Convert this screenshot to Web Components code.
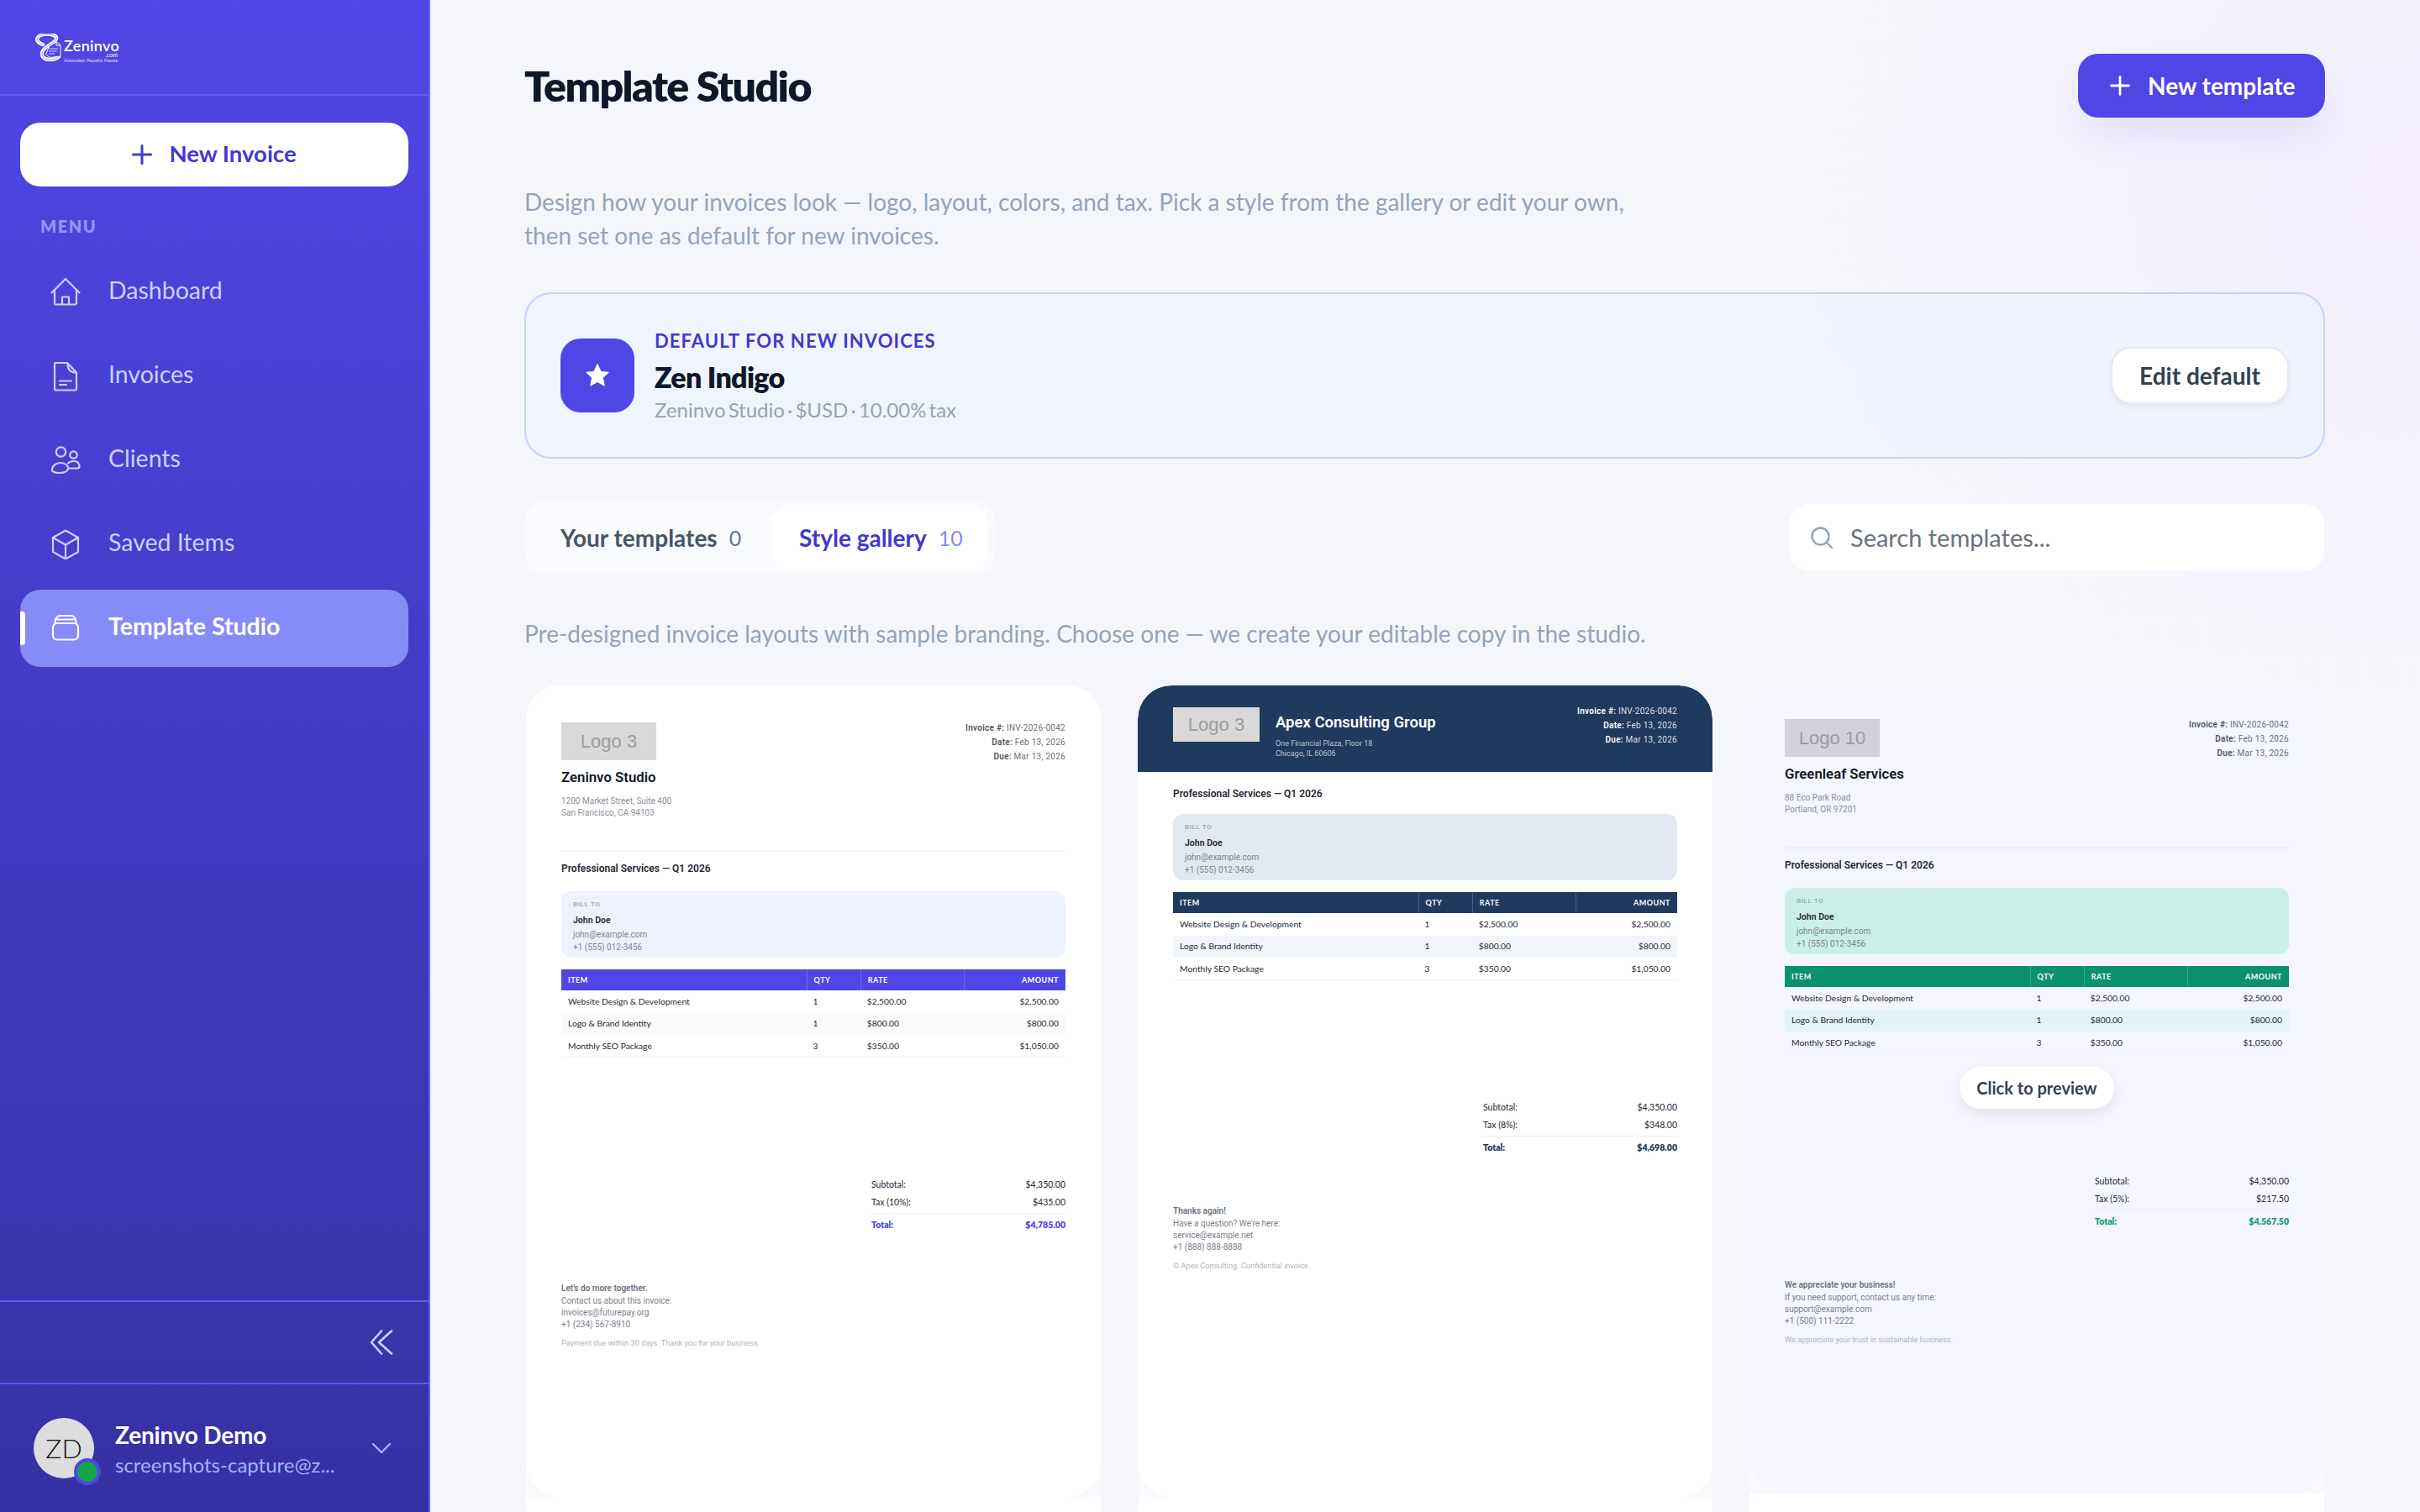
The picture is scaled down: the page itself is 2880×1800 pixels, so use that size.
<!DOCTYPE html>
<html lang="en">
<head>
<meta charset="utf-8">
<title>Template Studio</title>
<style>
  html, body { margin: 0; height: 100%; overflow: hidden; }
  body { font-family: "Lato", "Noto Sans", sans-serif; }
</style>
</head>
<body>
<app-shell>
  <side-bar slot="side">
    <nav-item icon="home">Dashboard</nav-item>
    <nav-item icon="doc">Invoices</nav-item>
    <nav-item icon="users">Clients</nav-item>
    <nav-item icon="cube">Saved Items</nav-item>
    <nav-item icon="stack" active>Template Studio</nav-item>
  </side-bar>
  <page-header>Template Studio</page-header>
  <p-text class="intro">Design how your invoices look — logo, layout, colors, and tax. Pick a style from the gallery or edit your own,<br>then set one as default for new invoices.</p-text>
  <default-card></default-card>
  <tab-row></tab-row>
  <p-text class="note">Pre-designed invoice layouts with sample branding. Choose one — we create your editable copy in the studio.</p-text>
  <card-grid>
    <invoice-card key="indigo"></invoice-card>
    <invoice-card key="apex"></invoice-card>
    <invoice-card key="green" hovered></invoice-card>
  </card-grid>
</app-shell>

<script>
const ICONS = {
  home: '<path d="M1.500 18.500 18 2l16.500 16.500"/><path d="M5 15v16a1.500 1.500 0 0 0 1.500 1.500h23A1.500 1.500 0 0 0 31 31V15"/><path d="M14 32.500V23.500h8v9"/>',
  doc: '<path d="M6 2h14l11 11.500v20a1 1 0 0 1-1 1H6a1 1 0 0 1-1-1V3a1 1 0 0 1 1-1z"/><path d="M20.500 2.500c-.5 6 2.500 11 10 11"/><path d="M11 23.500h14M11 28h8"/>',
  users: '<circle cx="12.500" cy="8" r="5.700"/><circle cx="27.500" cy="11.500" r="4.200"/><path d="M2 29.500c0-5 4.500-8.500 10-8.500 4.500 0 8 2.500 9.500 6-1 4-5 6-10 6-5.500 0-9.500-1-9.500-3.500z"/><path d="M21 21.500c1.500-1.500 4-2.500 7-2.500 4 0 6.500 2.500 6.500 7 0 1-1.500 1.500-4 1.500h-9"/>',
  cube: '<path d="M18 1.500 33 10v17l-15 8.500L3 27V10z"/><path d="M3 10l15 8.500L33 10M18 18.500v17"/>',
  stack: '<rect x="3" y="12" width="30" height="19.500" rx="5"/><path d="M5.500 12c0-4 1.500-9 6-9h13c4.500 0 6 5 6 9"/><path d="M8 7.500h20"/>'
};

class AppShell extends HTMLElement {
  constructor() {
    super();
    this.attachShadow({mode: 'open'}).innerHTML = `
    <style>
      :host { display: flex; width: 2880px; height: 1800px; overflow: hidden;
        background:
          radial-gradient(ellipse 760px 640px at 2880px 230px, #f4eefd 0%, rgba(244,238,253,0) 100%),
          #f5f6fc; }
      main { flex: 1; min-width: 0; padding: 64px 113px 0 112px; display: flex; flex-direction: column; }
    </style>
    <slot name="side"></slot>
    <main><slot></slot></main>`;
  }
}

class SideBar extends HTMLElement {
  constructor() {
    super();
    this.attachShadow({mode: 'open'}).innerHTML = `
    <style>
      :host { display: flex; flex-direction: column; width: 510px; height: 1800px; flex: none;
        border-right: 2px solid #6366f1;
        background: linear-gradient(180deg, #4f46e5 0%, #3730a3 100%); color: #fff; }
      .brand { border-bottom: 2px solid #5f5cf0; display: flex; align-items: flex-start; padding: 40px 0 0 42px; height: 72px; }
      .brand svg { width: 31px; height: 33px; flex: none; }
      .word { margin-left: 3px; width: 64px; color: #fff; }
      .word b { display: block; font: 600 18px/18px "Lato", sans-serif; margin-top: 5px; letter-spacing: .3px; }
      .word i { display: block; font: 400 7px/7px "Lato", sans-serif; text-align: right; margin-top: -1px; }
      .word span { display: block; font: 400 5px/6px "Lato", sans-serif; white-space: nowrap; color: #dfe0ff; }
      .new { margin: 32px 24px 0; height: 76px; border-radius: 24px; background: #fff; color: #4338ca;
        display: flex; align-items: center; justify-content: center; gap: 20px;
        font: 700 27.500px/1 "Lato", sans-serif; }
      .new span { position: relative; top: -1px; }
      .new svg { width: 24px; height: 24px; }
      .menu { margin: 35px 0 0 48px; font: 800 20px/24px "Lato", sans-serif; letter-spacing: 1.500px; color: #8d97f5; }
      nav { margin: 21px 24px 0; display: flex; flex-direction: column; gap: 8px; }
      .grow { flex: 1; }
      .collapse { border-top: 2px solid #5f5cf0; border-bottom: 2px solid #5f5cf0; height: 96px; display: flex; align-items: center; justify-content: flex-end; padding-right: 42px; }
      .collapse svg { width: 28px; height: 30px; }
      .user { height: 152px; display: flex; align-items: center; padding: 0 44px 0 40px; }
      .avatar { position: relative; width: 72px; height: 72px; border-radius: 50%; background: #ddd; color: #111; flex: none;
        display: flex; align-items: center; justify-content: center; font: 300 32px/1 "Lato", sans-serif; }
      .avatar::after { content: ""; position: absolute; right: -8px; bottom: -8px; width: 24px; height: 24px; border-radius: 50%;
        background: #16a34a; border: 4px solid #4f46e5; }
      .who { margin-left: 25px; flex: 1; min-width: 0; position: relative; top: 2px; }
      .who b { display: block; font: 700 28px/36px "Lato", sans-serif; color: #fff; letter-spacing: -.2px; }
      .who span { display: block; font: 400 24px/36px "Lato", sans-serif; color: #a5b4fc; white-space: nowrap; }
      .user > svg { width: 24px; height: 14px; flex: none; }
    </style>
    <div class="brand">
      <svg viewBox="0 0 31 33" fill="none">
        <path d="M9 13C3 11 0 7 4 3.500 8 0 18 0 23 2.500c4 2 2 6-3 9-6 3.500-11 7-12 11-1 5 3 8.500 9 8.500 5 0 9-1 11-3.500" stroke="#fff" stroke-width="4.200" stroke-linecap="round"/>
        <path d="M9 13C3 11 0 7 4 3.500 8 0 18 0 23 2.500c4 2 2 6-3 9-6 3.500-11 7-12 11-1 5 3 8.500 9 8.500 5 0 9-1 11-3.500" stroke="#5a53e6" stroke-width=".6"/>
        <path d="M17 14.500 25 10l5 3.500V27l-13 1.500-4.500-4z" fill="#4f46e5" stroke="#fff" stroke-width="1"/>
        <path d="M25 10.500v3.500h4.500" stroke="#fff" stroke-width="1"/>
        <path d="M17 18h10M16 21h10M16 24h7" stroke="#d5d6ff" stroke-width="1"/>
      </svg>
      <div class="word"><b>Zeninvo</b><i>.com</i><span>Automated. Peaceful. Precise.</span></div>
    </div>
    <div class="new">
      <svg viewBox="0 0 24 24" fill="none" stroke="currentColor" stroke-width="3" stroke-linecap="round"><path d="M12 1.500v21M1.500 12h21"/></svg>
      <span>New Invoice</span>
    </div>
    <div class="menu">MENU</div>
    <nav><slot></slot></nav>
    <div class="grow"></div>
    <div class="collapse">
      <svg viewBox="0 0 28 30" fill="none" stroke="#c7d2fe" stroke-width="2.600" stroke-linecap="round" stroke-linejoin="round"><path d="M14 1.500 2 15l12 13.500"/><path d="M26 1.500 11 15l15 13.500"/></svg>
    </div>
    <div class="user">
      <div class="avatar">ZD</div>
      <div class="who"><b>Zeninvo Demo</b><span>screenshots-capture@z...</span></div>
      <svg viewBox="0 0 24 14" fill="none" stroke="#a5b4fc" stroke-width="2.400" stroke-linecap="round" stroke-linejoin="round"><path d="M2 2l10 10L22 2"/></svg>
    </div>`;
  }
}

class NavItem extends HTMLElement {
  constructor() {
    super();
    this._root = this.attachShadow({mode: 'open'});
  }

  connectedCallback() {
    const icon = ICONS[this.getAttribute('icon')] || '';
    this._root.innerHTML = `
    <style>
      :host { display: flex; align-items: center; position: relative; height: 92px; border-radius: 24px;
        padding-left: 36px; gap: 33px; color: #c7d2fe; font: 400 28.500px/1 "Lato", sans-serif; }
      :host([active]) { background: #858cf8; color: #fff; font-weight: 700; }
      :host([active])::before { content: ""; position: absolute; left: 0; top: 26px; width: 6px; height: 40px; background: #fff; border-radius: 0 4px 4px 0; }
      svg { width: 36px; height: 36px; flex: none; }
      span { position: relative; top: -3px; }
    </style>
    <svg viewBox="0 0 36 36" fill="none" stroke="currentColor" stroke-width="2.200" stroke-linecap="round" stroke-linejoin="round">${icon}</svg>
    <span><slot></slot></span>`;
  }
}

class PageHeader extends HTMLElement {
  constructor() {
    super();
    this.attachShadow({mode: 'open'}).innerHTML = `
    <style>
      :host { display: flex; align-items: center; justify-content: space-between; height: 76px; flex: none; }
      h1 { margin: 0; font: 800 50px/1 "Lato", sans-serif; color: #0f172a; letter-spacing: -1.550px; }
      button { all: unset; box-sizing: border-box; width: 294px; height: 76px; border-radius: 24px; background: #4f46e5; color: #fff;
        display: flex; align-items: center; padding-left: 38px; gap: 21px; font: 700 28px/1 "Lato", sans-serif;
        box-shadow: 0 24px 48px -8px rgba(79,70,229,.12); }
      svg { width: 24px; height: 24px; }
    </style>
    <h1><slot></slot></h1>
    <button><svg viewBox="0 0 24 24" fill="none" stroke="currentColor" stroke-width="2.800" stroke-linecap="round"><path d="M12 1.500v21M1.500 12h21"/></svg><span>New template</span></button>`;
  }
}

class PText extends HTMLElement {
  constructor() {
    super();
    this.attachShadow({mode: 'open'}).innerHTML = `
    <style>
      :host { display: block; flex: none; font: 400 28px/40px "Lato", sans-serif; color: #94a3b8; }
      :host(.intro) { margin-top: 80px; }
      :host(.note) { margin-top: 50px; }
    </style><slot></slot>`;
  }
}

class DefaultCard extends HTMLElement {
  constructor() {
    super();
    this.attachShadow({mode: 'open'}).innerHTML = `
    <style>
      :host { display: flex; align-items: center; flex: none; box-sizing: border-box; height: 198px; margin-top: 48px;
        border: 2px solid #c7d2fe; border-radius: 32px; padding: 0 41px; background: rgba(238,242,255,.62); }
      .mark { width: 88px; height: 88px; border-radius: 24px; background: #4f46e5; display: flex; align-items: center; justify-content: center; flex: none; }
      .mark svg { width: 30px; height: 30px; }
      .txt { margin-left: 24px; flex: 1; }
      .lab { font: 700 22px/30px "Lato", sans-serif; letter-spacing: 1.100px; color: #4338ca; }
      .ttl { margin-top: 6px; font: 800 34px/44px "Lato", sans-serif; letter-spacing: -.7px; color: #0f172a; }
      .meta { margin-top: 1px; font: 400 24px/32px "Lato", sans-serif; word-spacing: -3px; color: #94a3b8; }
      button { all: unset; box-sizing: border-box; width: 212px; height: 68px; border-radius: 24px; background: #fff; border: 2px solid #e2e8f0;
        display: flex; align-items: center; justify-content: center; font: 700 28px/1 "Lato", sans-serif; color: #334155;
        box-shadow: 0 3px 6px rgba(15,23,42,.06); }
    </style>
    <div class="mark"><svg viewBox="0 0 24 24" fill="#fff" stroke="#fff" stroke-width="1" stroke-linejoin="round"><path d="M12 1.500l3.100 6.800 7.300.8-5.400 5 1.500 7.400-6.500-3.800-6.500 3.800 1.500-7.400-5.400-5 7.300-.8z"/></svg></div>
    <div class="txt">
      <div class="lab">DEFAULT FOR NEW INVOICES</div>
      <div class="ttl">Zen Indigo</div>
      <div class="meta">Zeninvo Studio · $USD · 10.00% tax</div>
    </div>
    <button>Edit default</button>`;
  }
}

class TabRow extends HTMLElement {
  constructor() {
    super();
    this.attachShadow({mode: 'open'}).innerHTML = `
    <style>
      :host { display: flex; align-items: center; justify-content: space-between; flex: none; height: 88px; margin: 50px 0 0 1px; padding-right: 1px; }
      .tabs { display: flex; box-sizing: border-box; height: 88px; width: 559px; padding: 8px; border-radius: 24px; background: rgba(255,255,255,.45); }
      .tab { height: 72px; display: flex; align-items: center; gap: 14px; border-radius: 20px; font: 700 28px/1 "Lato", sans-serif; color: #475569; padding-left: 33px; white-space: nowrap; box-sizing: border-box; }
      .tab:first-child { width: 285px; flex: none; padding-left: 34px; }
      .tab.on { background: #fff; color: #4338ca; flex: 1; }
      .tab em { font: 400 25px/1 "Lato", sans-serif; color: #64748b; }
      .tab.on em { color: #818cf8; }
      .search { box-sizing: border-box; width: 636px; height: 80px; background: #fff; border-radius: 24px; display: flex; align-items: center; padding-left: 25px; gap: 21px; font: 400 29px/1 "Lato", sans-serif; color: #6b7280; }
      .search svg { width: 26px; height: 26px; flex: none; }
      .search span { position: relative; top: -1px; }
    </style>
    <div class="tabs">
      <div class="tab">Your templates <em>0</em></div>
      <div class="tab on">Style gallery <em>10</em></div>
    </div>
    <div class="search">
      <svg viewBox="0 0 26 26" fill="none" stroke="#94a3b8" stroke-width="2.400" stroke-linecap="round"><circle cx="11.500" cy="11.500" r="10"/><path d="M19 19l6 6"/></svg>
      <span>Search templates...</span>
    </div>`;
  }
}

class CardGrid extends HTMLElement {
  constructor() {
    super();
    this.attachShadow({mode: 'open'}).innerHTML = `
    <style>
      :host { display: grid; grid-template-columns: repeat(3, 684px); gap: 44px; margin: 42px 0 0 2px; flex: none; }
    </style><slot></slot>`;
  }
}

const TEMPLATES = {
  indigo: {
    accent: '#4f46e5', bill: '#eef1fe', stripe: '#f9fafb', logoBg: '#d9d9d9', logo: 'Logo 3',
    name: 'Zeninvo Studio', addr: ['1200 Market Street, Suite 400', 'San Francisco, CA 94103'],
    tax: ['Tax (10%):', '$435.00'], total: '$4,785.00', total_color: '#4f46e5',
    foot: ["Let's do more together.", 'Contact us about this invoice:', 'invoices@futurepay.org', '+1 (234) 567-8910'],
    note: 'Payment due within 30 days. Thank you for your business.'
  },
  apex: {
    band: true, accent: '#1e3a5f', bill: '#e2e8f0', stripe: '#f1f5f9', logoBg: '#d9d9d9', logo: 'Logo 3',
    name: 'Apex Consulting Group', addr: ['One Financial Plaza, Floor 18', 'Chicago, IL 60606'],
    tax: ['Tax (8%):', '$348.00'], total: '$4,698.00', total_color: '#1e3a5f',
    foot: ['Thanks again!', "Have a question? We're here:", 'service@example.net', '+1 (888) 888-8888'],
    note: '© Apex Consulting. Confidential invoice.'
  },
  green: {
    accent: '#0b9170', bill: '#c9f0e6', stripe: '#e4f3f6', logoBg: '#d2d2dc', logo: 'Logo 10',
    name: 'Greenleaf Services', addr: ['88 Eco Park Road', 'Portland, OR 97201'],
    tax: ['Tax (5%):', '$217.50'], total: '$4,567.50', total_color: '#0f9d7a',
    foot: ['We appreciate your business!', 'If you need support, contact us any time:', 'support@example.com', '+1 (500) 111-2222'],
    note: 'We appreciate your trust in sustainable business.'
  }
};

const ROWS = [
  ['Website Design & Development', '1', '$2,500.00', '$2,500.00'],
  ['Logo & Brand Identity', '1', '$800.00', '$800.00'],
  ['Monthly SEO Package', '3', '$350.00', '$1,050.00']
];

class InvoiceCard extends HTMLElement {
  constructor() {
    super();
    this._root = this.attachShadow({mode: 'open'});
  }

  _meta() {
    return `<div class="meta">
      <div><b>Invoice #:</b> INV-2026-0042</div>
      <div><b>Date:</b> Feb 13, 2026</div>
      <div><b>Due:</b> Mar 13, 2026</div>
    </div>`;
  }

  _head(t) {
    const addr = t.addr.map((line) => `<div>${line}</div>`).join('');
    if (t.band) {
      return `<header class="band">
        <div class="logo small">${t.logo}</div>
        <div class="co"><div class="name">${t.name}</div><div class="addr">${addr}</div></div>
        ${this._meta()}
      </header>`;
    }
    return `<header class="plain">
      <div class="top">
        <div><div class="logo">${t.logo}</div><div class="name">${t.name}</div><div class="addr">${addr}</div></div>
        ${this._meta()}
      </div>
      <div class="rule"></div>
    </header>`;
  }

  connectedCallback() {
    const t = TEMPLATES[this.getAttribute('key')];
    const rows = ROWS.map((row) => `<div class="row">${row.map((c) => `<span>${c}</span>`).join('')}</div>`).join('');
    this._root.innerHTML = `
    <style>
      :host { display: block; height: 1100px; background: #fff; border-radius: 40px 40px 0 0; position: relative;
        --accent: ${t.accent}; }
      :host([hovered]) { top: -4px; }
      .preview { height: 966px; box-sizing: border-box; overflow: hidden; position: relative; background: #f8f9fd; border-radius: 40px 40px 0 0; }
      .sheet { height: 100%; box-sizing: border-box; background: #fff; border-radius: 40px; overflow: hidden; font-family: "Roboto", sans-serif; color: #1f2937; }
      :host([hovered]) .sheet { background: #f4f5fd; }
      .plain { padding: 44px 42px 0; }
      .top { display: flex; justify-content: space-between; align-items: flex-start; }
      .logo { width: 113px; height: 45px; background: ${t.logoBg}; color: #9c9ca0; display: flex; align-items: center; justify-content: center; font: 400 22px/1 "Liberation Sans", sans-serif; }
      .logo.small { width: 103px; height: 41px; flex: none; }
      .name { margin-top: 10px; font: 600 16.800px/20px "Roboto", sans-serif; color: #111827; white-space: nowrap; }
      .addr { margin-top: 12px; font: 400 10px/14px "Roboto", sans-serif; color: #8b8f98; }
      .meta { text-align: right; font: 400 10px/17px "Roboto", sans-serif; color: #6b7280; letter-spacing: .27px; margin-top: -2.500px; }
      .meta b { font-weight: 600; color: #4b5563; }
      .rule { height: 1px; margin-top: 38px; background: #eceef2; }
      :host([hovered]) .rule { background: #e4e5f2; }
      .band { background: ${t.accent}; height: 103px; box-sizing: border-box; padding: 26px 42px 0; display: flex; align-items: flex-start; color: #fff; }
      .band .co { margin-left: 19px; flex: 1; }
      .band .name { color: #fff; margin-top: 8px; font-size: 18.500px; line-height: 20px; }
      .band .addr { margin-top: 9px; line-height: 12px; color: rgba(255,255,255,.7); font-size: 9px; }
      .band .meta { color: rgba(255,255,255,.85); margin-top: -4px; }
      .band .meta b { color: #fff; }
      .body { padding: 12px 42px 0; }
      .band + .body { padding-top: 18px; }
      .svc { font: 600 12px/16px "Roboto", sans-serif; color: #1f2937; }
      .bill { margin-top: 19px; height: 79px; box-sizing: border-box; padding: 11px 14px 0; border-radius: 12px; background: ${t.bill}; }
      .band + .body .bill { margin-top: 16px; }
      .bill .k { font: 600 8px/10px "Roboto", sans-serif; letter-spacing: .6px; color: #a3a8b3; }
      .bill .n { margin-top: 7px; font: 600 10.500px/14px "Roboto", sans-serif; color: #1f2937; }
      .bill .c { margin-top: 2px; font: 400 10px/15px "Roboto", sans-serif; color: #7d838f; }
      .bill .c + .c { margin-top: 0; }
      .table { margin-top: 14px; font: 400 10.300px/1 "Lato", sans-serif; color: #1f2937; }
      .row, .th { display: grid; grid-template-columns: 48.6% 10.7% 20.500% 20.200%; align-items: center; }
      .row { height: 26.500px; border-bottom: 1px solid transparent; box-sizing: border-box; }
      .row:nth-child(3) { background: ${t.stripe}; }
      .row:nth-child(4) { border-bottom-color: #f1f2f6; }
      .row span { padding: 0 8px; white-space: nowrap; }
      .row span:last-child, .th span:last-child { text-align: right; }
      .th { height: 25px; background: var(--accent); color: #fff; font: 700 9px/25px "Lato", sans-serif; letter-spacing: .5px; }
      .th span { padding: 0 8px; border-left: 1px solid rgba(255,255,255,.2); }
      .th span:first-child { border-left: 0; }
      .totals { margin: 141px 0 0 auto; width: 231px; font: 400 10.500px/21px "Lato", sans-serif; color: #1f2937; }
      .totals div { display: flex; justify-content: space-between; }
      .totals .sum { margin-top: 2px; border-top: 1px solid #eceef2; padding-top: 3px; font-weight: 800; color: ${t.total_color}; }
      .foot { margin-top: 58px; font: 400 10px/14px "Roboto", sans-serif; color: #7b808b; }
      .foot b { display: block; font-weight: 600; margin-bottom: 1px; color: #6b7280; }
      .foot p { margin: 8px 0 0; color: #b0b4bd; font-size: 9.200px; }
      .pill { display: none; position: absolute; left: 50%; top: 458px; transform: translateX(-50%); height: 50px; width: 184px; border-radius: 25px;
        background: #fff; align-items: center; justify-content: center; font: 700 20px/1 "Lato", sans-serif; color: #334155;
        box-shadow: 0 6px 16px rgba(15,23,42,.08); white-space: nowrap; }
      :host([hovered]) .pill { display: flex; }
    </style>
    <div class="preview">
      <div class="sheet">
        ${this._head(t)}
        <div class="body">
          <div class="svc">Professional Services — Q1 2026</div>
          <div class="bill">
            <div class="k">BILL TO</div>
            <div class="n">John Doe</div>
            <div class="c">john@example.com</div>
            <div class="c">+1 (555) 012-3456</div>
          </div>
          <div class="table">
            <div class="th"><span>ITEM</span><span>QTY</span><span>RATE</span><span>AMOUNT</span></div>
            ${rows}
          </div>
          <div class="totals">
            <div><span>Subtotal:</span><span>$4,350.00</span></div>
            <div><span>${t.tax[0]}</span><span>${t.tax[1]}</span></div>
            <div class="sum"><span>Total:</span><span>${t.total}</span></div>
          </div>
          <div class="foot">
            <b>${t.foot[0]}</b>
            <div>${t.foot[1]}</div><div>${t.foot[2]}</div><div>${t.foot[3]}</div>
            <p>${t.note}</p>
          </div>
        </div>
      </div>
      <div class="pill">Click to preview</div>
    </div>`;
  }
}

window.customElements.define('app-shell', AppShell);
window.customElements.define('side-bar', SideBar);
window.customElements.define('nav-item', NavItem);
window.customElements.define('page-header', PageHeader);
window.customElements.define('p-text', PText);
window.customElements.define('default-card', DefaultCard);
window.customElements.define('tab-row', TabRow);
window.customElements.define('card-grid', CardGrid);
window.customElements.define('invoice-card', InvoiceCard);
</script>
</body>
</html>
